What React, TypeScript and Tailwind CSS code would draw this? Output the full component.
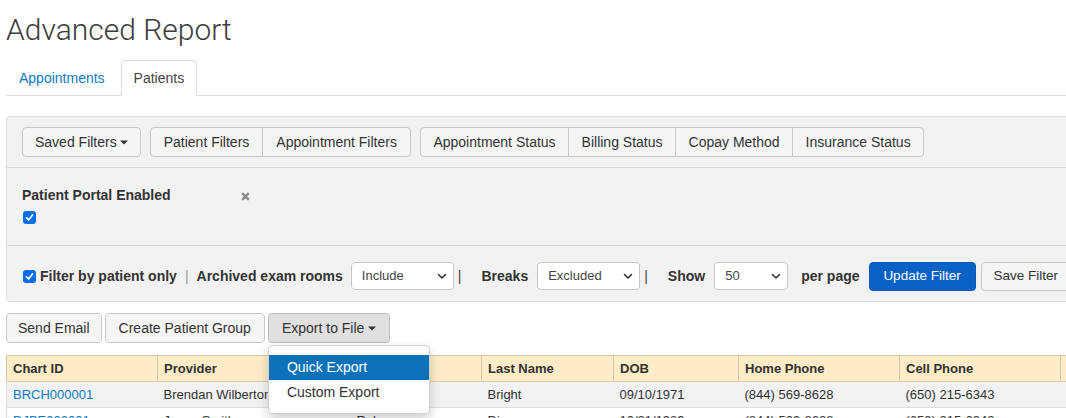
import React from 'react';

const Caret = ({ className = 'ml-[4px]' }: { className?: string }) => (
  <svg width="8" height="5" viewBox="0 0 8 5" className={className}>
    <path d="M0 0.5h8L4 4.5z" fill="#333" />
  </svg>
);

const Chevron = () => (
  <svg width="10" height="7" viewBox="0 0 10 7">
    <path d="M1.5 1.5L5 5l3.5-3.5" fill="none" stroke="#333" strokeWidth="1.6" strokeLinecap="round" strokeLinejoin="round" />
  </svg>
);

const CheckBox = () => (
  <span className="inline-flex h-[13px] w-[13px] shrink-0 items-center justify-center rounded-[3px] bg-[#0b6ee8]">
    <svg width="9" height="9" viewBox="0 0 9 9">
      <path d="M1.6 4.9l2 2 3.9-5" fill="none" stroke="#fff" strokeWidth="1.7" strokeLinecap="round" strokeLinejoin="round" />
    </svg>
  </span>
);

const FakeSelect = ({ value, width }: { value: string; width: string }) => (
  <div className={`flex h-[28px] items-center justify-between rounded-[4px] border border-[#c8c8c8] bg-white pl-[10px] pr-[6px] text-[13px] text-[#444] ${width}`}>
    <span>{value}</span>
    <Chevron />
  </div>
);

const Pipe = ({ className }: { className: string }) => <span className={`text-[14px] ${className}`}>|</span>;

const btn = 'flex h-full items-center px-[13px] text-[14px] text-[#333]';
const btnTight = 'flex h-full items-center px-[12.5px] text-[14px] text-[#333]';

const rows = [
  ['BRCH000001', 'Brendan Wilberton', 'Ann', 'Bright', '09/10/1971', '(844) 569-8628', '(650) 215-6343', ''],
  ['DJBE000001', 'Jenny Smith', 'Rob', 'Diaz', '10/21/1989', '(844) 569-8628', '(650) 215-6343', ''],
];

export default function App() {
  return (
    <div className="relative h-[418px] w-[1066px] overflow-hidden bg-white font-['Liberation_Sans',Arial,sans-serif] text-[#333]">
      <div className="w-[1140px] pl-[6px]">
        <h1 className="pt-[12px] font-['Roboto',sans-serif] text-[30px] font-light leading-[36px] text-[#3c3c3c]">
          Advanced Report
        </h1>

        {/* Tabs */}
        <ul className="mt-[12px] flex border-b border-[#dddddd]">
          <li className="mr-[3px] -mb-px">
            <a className="block rounded-t-[4px] border border-transparent px-[12px] py-[8px] text-[14px] leading-[18px] text-[#0b7bc1]">
              Appointments
            </a>
          </li>
          <li className="-mb-px">
            <a className="block rounded-t-[4px] border border-[#dddddd] border-b-transparent bg-white px-[12px] py-[8px] text-[14px] leading-[18px] text-[#444]">
              Patients
            </a>
          </li>
        </ul>

        {/* Filter panel */}
        <div className="mt-[20px] rounded-[4px] border border-[#dddddd] bg-[#f2f2f2]">
          <div className="flex h-[51px] items-center gap-[9px] border-b border-[#d8d8d8] px-[15px]">
            <div className="flex h-[30px] rounded-[4px] border border-[#c8c8c8] bg-[#f5f5f5]">
              <button className="flex h-full items-center px-[12px] text-[14px] text-[#333]">
                Saved Filters
                <Caret className="ml-[3px]" />
              </button>
            </div>
            <div className="flex h-[30px] divide-x divide-[#c8c8c8] rounded-[4px] border border-[#c8c8c8] bg-[#f5f5f5]">
              <button className={btn}>Patient Filters</button>
              <button className={btn}>Appointment Filters</button>
            </div>
            <div className="flex h-[30px] divide-x divide-[#c8c8c8] rounded-[4px] border border-[#c8c8c8] bg-[#f5f5f5]">
              <button className={btnTight}>Appointment Status</button>
              <button className={btnTight}>Billing Status</button>
              <button className={btnTight}>Copay Method</button>
              <button className={btnTight}>Insurance Status</button>
            </div>
          </div>

          <div className="h-[78px] border-b border-[#d8d8d8] px-[15px] pt-[17px]">
            <div className="flex items-center">
              <span className="w-[219px] text-[14px] font-bold leading-[20px]">Patient Portal Enabled</span>
              <svg width="9" height="9" viewBox="0 0 9 9" className="mt-[2px]">
                <path d="M1.2 1.2l6.6 6.6M7.8 1.2L1.2 7.8" stroke="#8a8a8a" strokeWidth="2.4" />
              </svg>
            </div>
            <div className="mt-[6px] flex pl-px">
              <CheckBox />
            </div>
          </div>

          <div className="flex h-[55px] items-center px-[15px] pt-[5px] text-[14px]">
            <span className="ml-px flex"><CheckBox /></span>
            <span className="ml-[4px] font-bold">Filter by patient only</span>
            <Pipe className="ml-[8px] text-[#9a9a9a]" />
            <span className="ml-[8px] font-bold">Archived exam rooms</span>
            <span className="ml-[8px]"><FakeSelect value="Include" width="w-[103px]" /></span>
            <Pipe className="ml-[4px] text-[#444]" />
            <span className="ml-[20px] font-bold">Breaks</span>
            <span className="ml-[9px]"><FakeSelect value="Excluded" width="w-[103px]" /></span>
            <Pipe className="ml-[4px] text-[#444]" />
            <span className="ml-[20px] font-bold">Show</span>
            <span className="ml-[9px]"><FakeSelect value="50" width="w-[74px]" /></span>
            <span className="ml-[13px] font-bold">per page</span>
            <button className="ml-[9px] flex h-[29px] w-[107px] items-center justify-center rounded-[4px] border border-[#0a58b8] bg-[#0a62c6] text-[13.5px] text-white">
              Update Filter
            </button>
            <button className="ml-[5px] flex h-[29px] w-[100px] items-center rounded-[4px] border border-[#c8c8c8] bg-[#f5f5f5] pl-[12px] text-[13.5px] text-[#333]">
              Save Filter
            </button>
          </div>
        </div>

        {/* Actions */}
        <div className="mt-[11px] flex h-[30px] items-stretch">
          <button className="flex items-center rounded-[4px] border border-[#c8c8c8] bg-[#f5f5f5] px-[11px] text-[14px]">
            Send Email
          </button>
          <button className="ml-[3px] flex items-center rounded-[4px] border border-[#c8c8c8] bg-[#f5f5f5] px-[13px] text-[14px]">
            Create Patient Group
          </button>
          <div className="relative ml-[3px]">
            <button className="flex h-full items-center rounded-[4px] border border-[#bdbdbd] bg-[#e0e0e0] px-[13px] text-[14px]">
              Export to File
              <Caret />
            </button>
            <div className="absolute left-0 top-[calc(100%+2px)] z-10 w-[162px] rounded-[4px] border border-[#d0d0d0] bg-white pb-[8px] pt-[9px] shadow-[0_6px_12px_rgba(0,0,0,0.18)]">
              <div className="flex h-[25px] items-center bg-[#0b72b7] px-[18px] text-[14px] text-white">Quick Export</div>
              <div className="flex h-[25px] items-center px-[18px] text-[14px] text-[#333]">Custom Export</div>
            </div>
          </div>
        </div>

        {/* Table */}
        <table className="mt-[12px] w-[1134px] table-fixed border-collapse text-[13px]">
          <colgroup>
            <col className="w-[151px]" />
            <col className="w-[193px]" />
            <col className="w-[131px]" />
            <col className="w-[132px]" />
            <col className="w-[125px]" />
            <col className="w-[161px]" />
            <col className="w-[161px]" />
            <col className="w-[80px]" />
          </colgroup>
          <thead>
            <tr>
              {['Chart ID', 'Provider', 'First Name', 'Last Name', 'DOB', 'Home Phone', 'Cell Phone', 'Email'].map((h) => (
                <th key={h} className="h-[26px] border border-[#d6cba8] bg-[#fdecc6] px-[6px] text-left font-bold text-[#333]">
                  {h}
                </th>
              ))}
            </tr>
          </thead>
          <tbody>
            {rows.map((r, i) => (
              <tr key={r[0]} className={i % 2 === 0 ? 'bg-[#f2f2f2]' : 'bg-white'}>
                {r.map((c, j) => (
                  <td key={j} className={`h-[26px] border-b border-[#dddddd] px-[6px] ${j === 0 ? 'border-l text-[#0b7bc1]' : 'text-[#333]'}`}>
                    {c}
                  </td>
                ))}
              </tr>
            ))}
          </tbody>
        </table>
      </div>
    </div>
  );
}
